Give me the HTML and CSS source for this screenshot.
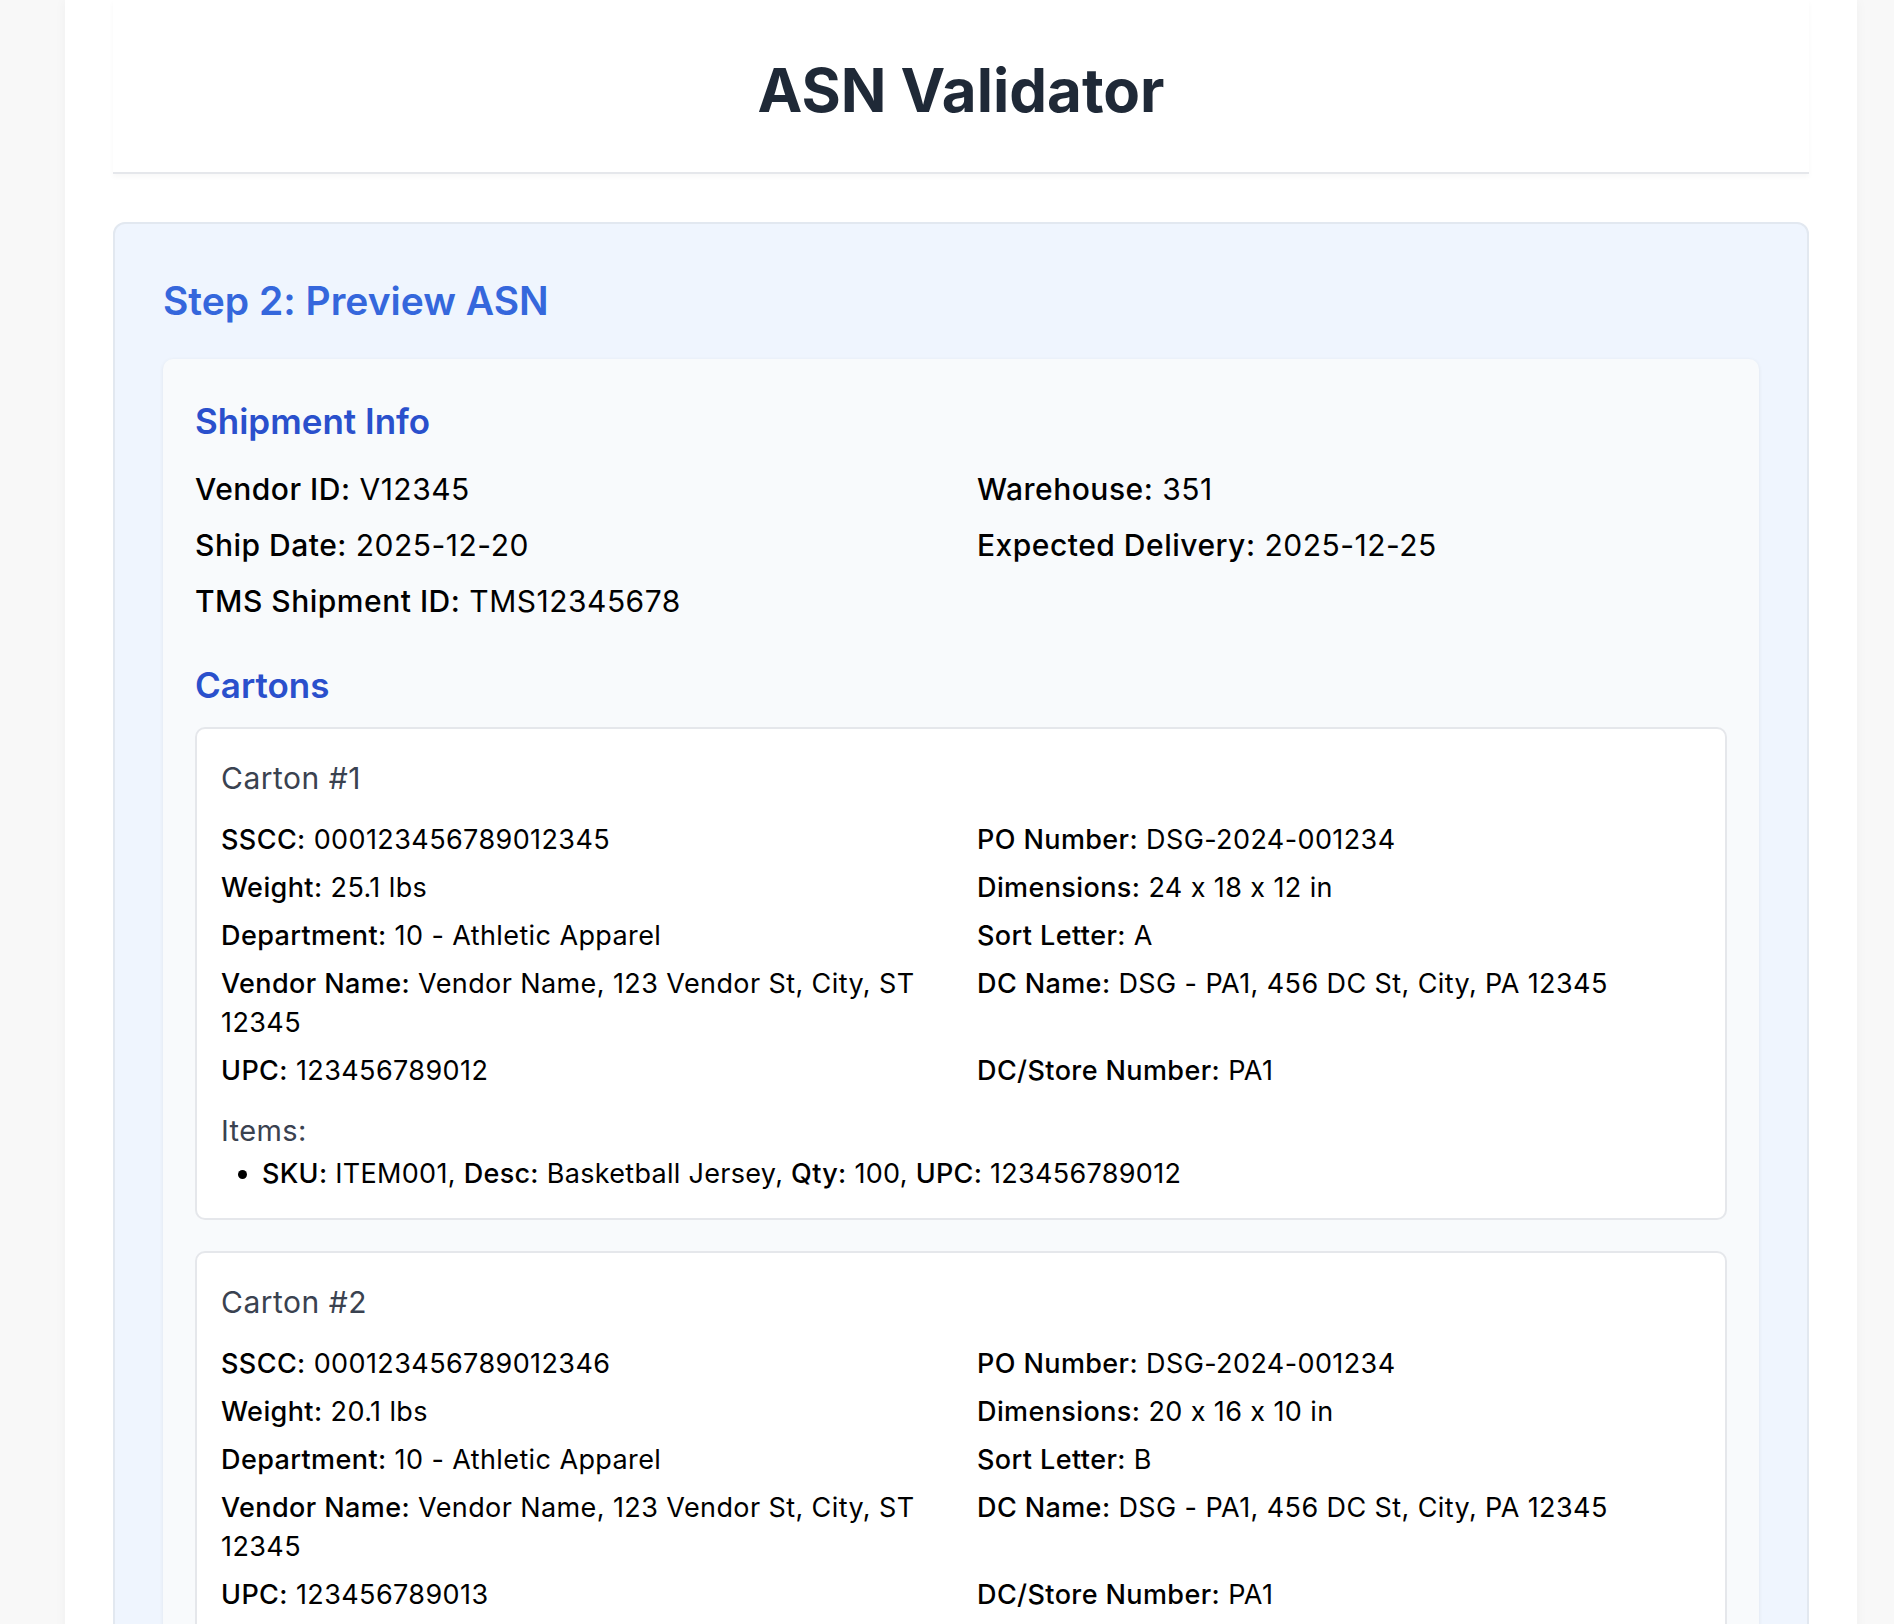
FILE: index.html
```html
<!DOCTYPE html>
<html lang="en">
<head>
<meta charset="utf-8">
<title>ASN Validator</title>
<link rel="stylesheet" href="styles.css">
</head>
<body>
<div class="container">
  <header class="app-header">
    <h1 class="app-title">ASN Validator</h1>
  </header>

  <section class="step-card">
    <h2 class="step-title">Step 2: Preview ASN</h2>
    <div class="preview">
      <h3 class="section-title">Shipment Info</h3>
      <div class="info-grid">
        <div class="field"><span class="label">Vendor ID:</span> V12345</div>
        <div class="field"><span class="label">Warehouse:</span> 351</div>
        <div class="field"><span class="label">Ship Date:</span> 2025-12-20</div>
        <div class="field"><span class="label">Expected Delivery:</span> 2025-12-25</div>
        <div class="field"><span class="label">TMS Shipment ID:</span> TMS12345678</div>
      </div>

      <h3 class="section-title cartons-title">Cartons</h3>

      <div class="carton">
        <h4 class="carton-title">Carton #1</h4>
        <div class="carton-grid">
          <div class="cfield"><span class="label">SSCC:</span> 000123456789012345</div>
          <div class="cfield"><span class="label">PO Number:</span> DSG-2024-001234</div>
          <div class="cfield"><span class="label">Weight:</span> 25.1 lbs</div>
          <div class="cfield"><span class="label">Dimensions:</span> 24 x 18 x 12 in</div>
          <div class="cfield"><span class="label">Department:</span> 10 - Athletic Apparel</div>
          <div class="cfield"><span class="label">Sort Letter:</span> A</div>
          <div class="cfield"><span class="label">Vendor Name:</span> Vendor Name, 123 Vendor St, City, ST 12345</div>
          <div class="cfield"><span class="label">DC Name:</span> DSG - PA1, 456 DC St, City, PA 12345</div>
          <div class="cfield"><span class="label">UPC:</span> 123456789012</div>
          <div class="cfield"><span class="label">DC/Store Number:</span> PA1</div>
        </div>
        <h5 class="items-title">Items:</h5>
        <ul class="items">
          <li><span class="label">SKU:</span> ITEM001, <span class="label">Desc:</span> Basketball Jersey, <span class="label">Qty:</span> 100, <span class="label">UPC:</span> 123456789012</li>
        </ul>
      </div>

      <div class="carton">
        <h4 class="carton-title">Carton #2</h4>
        <div class="carton-grid">
          <div class="cfield"><span class="label">SSCC:</span> 000123456789012346</div>
          <div class="cfield"><span class="label">PO Number:</span> DSG-2024-001234</div>
          <div class="cfield"><span class="label">Weight:</span> 20.1 lbs</div>
          <div class="cfield"><span class="label">Dimensions:</span> 20 x 16 x 10 in</div>
          <div class="cfield"><span class="label">Department:</span> 10 - Athletic Apparel</div>
          <div class="cfield"><span class="label">Sort Letter:</span> B</div>
          <div class="cfield"><span class="label">Vendor Name:</span> Vendor Name, 123 Vendor St, City, ST 12345</div>
          <div class="cfield"><span class="label">DC Name:</span> DSG - PA1, 456 DC St, City, PA 12345</div>
          <div class="cfield"><span class="label">UPC:</span> 123456789013</div>
          <div class="cfield"><span class="label">DC/Store Number:</span> PA1</div>
        </div>
        <h5 class="items-title">Items:</h5>
        <ul class="items">
          <li><span class="label">SKU:</span> ITEM002, <span class="label">Desc:</span> Running Shorts, <span class="label">Qty:</span> 150, <span class="label">UPC:</span> 123456789013</li>
        </ul>
      </div>
    </div>
  </section>
</div>
</body>
</html>
```

FILE: styles.css
```css
* {
  box-sizing: border-box;
}

html, body {
  margin: 0;
  padding: 0;
}

body {
  background: #f8f8f8;
  font-family: Inter, "Noto Sans", "Liberation Sans", sans-serif;
  font-feature-settings: "calt" 0;
  color: #111;
}

.container {
  width: 1792px;
  margin-left: 65px;
  padding: 0 48px 60px;
  background: #ffffff;
  box-shadow: 0 0 12px rgba(0, 0, 0, 0.04);
  min-height: 1700px;
}

.app-header {
  background: #ffffff;
  padding: 54px 0 46px;
  border-bottom: 2px solid #e5e7eb;
  box-shadow: 0 3px 5px rgba(0, 0, 0, 0.03);
  text-align: center;
}

.app-title {
  margin: 0;
  font-size: 60px;
  line-height: 72px;
  font-weight: 700;
  color: #1f2937;
  letter-spacing: 0;
}

.step-card {
  margin-top: 48px;
  background: #eff5fe;
  border: 2px solid #e2e8f0;
  border-radius: 12px;
  padding: 53px 48px 48px;
}

.step-title {
  margin: 0 0 34px;
  font-size: 39px;
  line-height: 48px;
  font-weight: 600;
  color: #3567dc;
}

.preview {
  background: #f8fafc;
  border-radius: 10px;
  box-shadow: 0 1px 4px rgba(0, 0, 0, 0.07);
  padding: 41px 32px 40px;
}

.section-title {
  margin: 0;
  font-size: 35px;
  line-height: 43px;
  font-weight: 600;
  color: #2a50cc;
}

.info-grid {
  display: grid;
  grid-template-columns: 1fr 1fr;
  column-gap: 32px;
  row-gap: 12px;
  margin-top: 24px;
}

.field {
  font-size: 30px;
  line-height: 44px;
  letter-spacing: 0.5px;
  color: #000;
}

.label {
  font-weight: 500;
}

.cartons-title {
  margin-top: 41px;
  margin-bottom: 20px;
}

.carton {
  background: #ffffff;
  border: 2px solid #e5e7eb;
  border-radius: 10px;
  padding: 31px 24px 25px;
  margin-bottom: 31px;
}

.carton-title {
  margin: 0;
  font-size: 30px;
  line-height: 36px;
  font-weight: 400;
  letter-spacing: 0.5px;
  color: #3a4250;
}

.carton-grid {
  display: grid;
  grid-template-columns: 1fr 1fr;
  column-gap: 32px;
  row-gap: 9px;
  margin-top: 24px;
}

.cfield {
  font-size: 27px;
  line-height: 39px;
  letter-spacing: 0.4px;
  color: #000;
}

.items-title {
  margin: 23px 0 0;
  font-size: 29px;
  line-height: 35px;
  font-weight: 400;
  letter-spacing: 0.4px;
  color: #3a4250;
}

.items {
  margin: 6px 0 0;
  padding-left: 41px;
  font-size: 27px;
  line-height: 39px;
  letter-spacing: 0.3px;
  color: #000;
}
```
